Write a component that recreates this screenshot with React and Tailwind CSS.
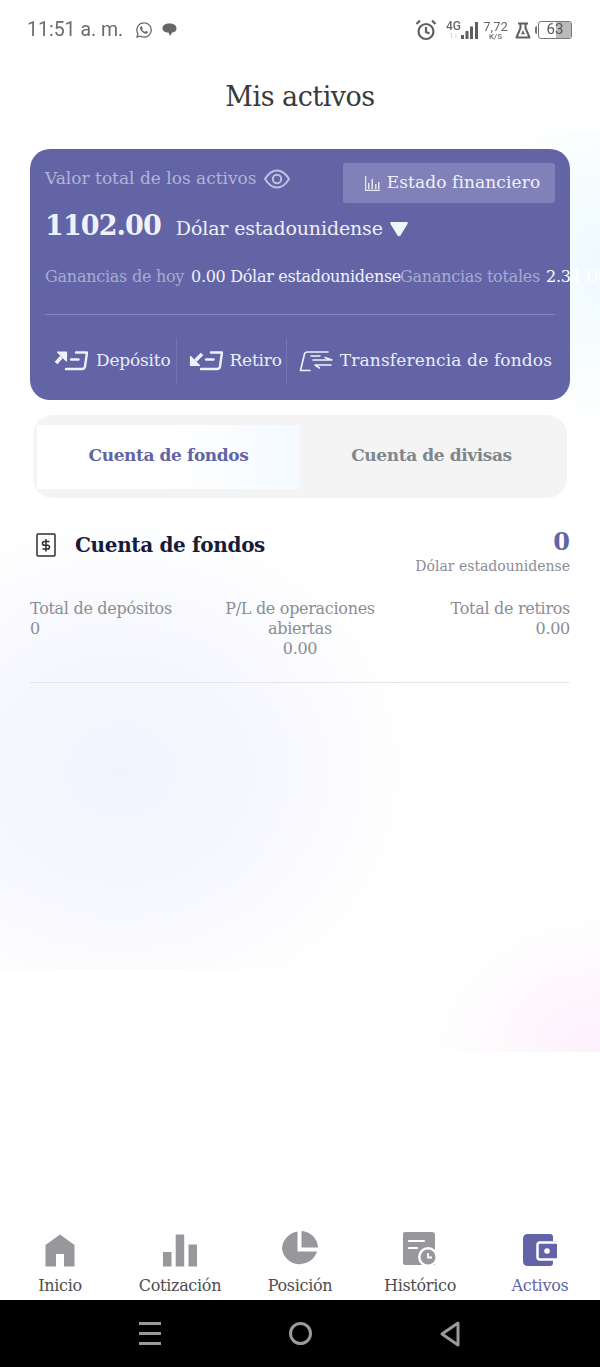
import { FaWhatsapp } from "react-icons/fa";

const STATS = [
  { label: "Total de depósitos", value: "0", align: "text-left" },
  { label: "P/L de operaciones abiertas", value: "0.00", align: "text-center" },
  { label: "Total de retiros", value: "0.00", align: "text-right" },
];

function HomeIcon() {
  return (
    <svg width="30" height="33" viewBox="0 0 30 33" fill="#97979c">
      <path d="M15 0.5 L29.5 11 V32.5 H19 V20 H11 V32.5 H0.5 V11 Z" />
    </svg>
  );
}

function BarsIcon() {
  return (
    <svg width="34" height="33" viewBox="0 0 34 33" fill="#97979c">
      <rect x="0" y="18" width="8.5" height="14.5" />
      <rect x="12.7" y="0.5" width="8.5" height="32" />
      <rect x="25.5" y="10.5" width="8.5" height="22" />
    </svg>
  );
}

function PieIcon() {
  return (
    <svg width="36" height="36" viewBox="0 0 36 36" fill="#97979c">
      <path d="M15.5 0.5 V20.5 H35 A18 18 0 0 1 0 18 A18 18 0 0 1 15.5 0.5 Z" />
      <path d="M19.5 0 A17.5 17.5 0 0 1 36 16.5 H19.5 Z" />
    </svg>
  );
}

function HistoryIcon() {
  return (
    <svg width="36" height="36" viewBox="0 0 36 36">
      <path d="M3 1 H30 Q33 1 33 4 V34 H3 Q1 34 1 32 V3 Q1 1 3 1 Z" fill="#97979c" />
      <path d="M7 10 H22 M7 17 H15" stroke="#fff" strokeWidth="2.2" strokeLinecap="round" />
      <circle cx="26" cy="26" r="10" fill="#fff" />
      <circle cx="26" cy="26" r="7.5" fill="#97979c" />
      <path d="M26 22 V26.5 H30" stroke="#fff" strokeWidth="1.8" fill="none" />
    </svg>
  );
}

function WalletIcon() {
  return (
    <svg width="35" height="33" viewBox="0 0 35 33">
      <path d="M5 0 H27 Q30 0 30 3 V7 H34 V26 H30 V29 Q30 32 27 32 H5 Q0 32 0 27 V5 Q0 0 5 0 Z" fill="#6264a7" />
      <path d="M34 8.5 H17 Q14.5 8.5 14.5 11 V23 Q14.5 25.5 17 25.5 H34" fill="none" stroke="#fff" strokeWidth="2.5" />
      <circle cx="24" cy="17" r="2.8" fill="#fff" />
    </svg>
  );
}

const TABS = [
  { label: "Inicio", icon: HomeIcon },
  { label: "Cotización", icon: BarsIcon },
  { label: "Posición", icon: PieIcon },
  { label: "Histórico", icon: HistoryIcon },
  { label: "Activos", icon: WalletIcon, active: true },
];

function CardOutline() {
  return <path d="M17 9.5 H24.5 M22 2.5 H33 L31 16.5 Q30.5 19 28 19 H12" />;
}

function DepositIcon() {
  return (
    <svg width="34" height="22" viewBox="0 0 34 22" fill="none" stroke="#f1f1fa" strokeWidth="2.4" strokeLinecap="round" strokeLinejoin="round">
      <path d="M3.5 2 H12.5 V11 Z" fill="#f1f1fa" strokeWidth="1.2" />
      <path d="M7.5 7 L2 13" strokeWidth="3.6" strokeLinecap="butt" />
      <CardOutline />
    </svg>
  );
}

function WithdrawIcon() {
  return (
    <svg width="34" height="22" viewBox="0 0 34 22" fill="none" stroke="#f1f1fa" strokeWidth="2.4" strokeLinecap="round" strokeLinejoin="round">
      <path d="M1.5 6.5 V15.5 H10.5 Z" fill="#f1f1fa" strokeWidth="1.2" />
      <path d="M6.5 10.5 L13 4" strokeWidth="3.6" strokeLinecap="butt" />
      <CardOutline />
    </svg>
  );
}

function TransferIcon() {
  return (
    <svg width="34" height="22" viewBox="0 0 34 22" fill="none" stroke="#f1f1fa" strokeWidth="1.6" strokeLinecap="round" strokeLinejoin="round">
      <path d="M11 20.5 H1.5 L5.5 4 Q6 2 8.5 2 H29" />
      <path d="M12 6 H21 M14 10 H33 L26 7.5 M32 15 H16 L20.5 18" />
    </svg>
  );
}

function StatusBar() {
  return (
    <div className="flex h-[60px] items-center justify-between pl-[27px] pr-[28px] text-[#6b6b6b] font-['Roboto',sans-serif] blur-[0.3px]">
      <div className="flex items-center">
        <span className="text-[19.5px] leading-none">11:51 a. m.</span>
        <FaWhatsapp className="ml-[12px] h-[18px] w-[18px]" />
        <svg className="ml-[9px]" width="15" height="14" viewBox="0 0 15 14" fill="#666">
          <path d="M7.5 0.5 C12 0.5 14.5 2.5 14.5 5.5 C14.5 8 12.5 9.5 10 9.5 L8 13 L6.5 9.5 C3 9.5 0.5 8 0.5 5.5 C0.5 2.5 3 0.5 7.5 0.5 Z" />
        </svg>
      </div>
      <div className="flex items-center">
        <svg width="22" height="22" viewBox="0 0 22 22" fill="none" stroke="#5f5f5f" strokeWidth="2.2">
          <circle cx="11" cy="12.5" r="7.5" />
          <path d="M11 8 V13 L14.5 14.5 M1.5 5 L5 1.5 M20.5 5 L17 1.5" />
        </svg>
        <div className="ml-[9px] flex w-[15px] flex-col items-center leading-none">
          <span className="text-[12px] font-medium leading-[12px]">4G</span>
          <span className="text-[8px] leading-[8px] text-[#c4c4c4]">1↓</span>
        </div>
        <svg width="17" height="17" viewBox="0 0 17 17" fill="#5f5f5f">
          <rect x="0" y="13" width="3" height="4" />
          <rect x="4.5" y="9" width="3" height="8" />
          <rect x="9" y="4.5" width="3" height="12.5" />
          <rect x="14" y="0" width="3" height="17" />
        </svg>
        <div className="ml-[6px] flex w-[23px] flex-col items-center leading-none">
          <span className="text-[13px] leading-[13px]">7,72</span>
          <span className="text-[8px] font-medium leading-[8px]">K/S</span>
        </div>
        <svg className="ml-[8px]" width="16" height="17" viewBox="0 0 16 17" fill="none" stroke="#5f5f5f" strokeWidth="2" strokeLinejoin="round">
          <path d="M3 1.5 H13 M5.5 1.5 V6 L1.5 15.5 H14.5 L10.5 6 V1.5" />
          <path d="M8 8.5 L6.5 12 H9.5 Z" fill="#5f5f5f" strokeWidth="0.5" />
        </svg>
        <span className="ml-[4px] h-[8px] w-[2px] rounded-l-sm bg-[#777]" />
        <div className="relative ml-[1px] h-[18px] w-[34px] overflow-hidden rounded-[3px] border-[1.5px] border-[#777] text-center text-[15px] leading-[15px] text-[#555]">
          <span className="absolute inset-y-0 right-0 w-[15px] bg-[#b9b9b9]" />
          <span className="relative">63</span>
        </div>
      </div>
    </div>
  );
}

function ActionDivider({ className }) {
  return <span className={`block h-[46px] w-px bg-[#7375b0] ${className}`} />;
}

function BalanceCard() {
  return (
    <section className="mx-[30px] mt-[19px] h-[251px] rounded-[20px] bg-[#6264a5] px-[15px]">
      <div className="flex items-start justify-between pt-[14px]">
        <div className="flex items-center gap-[7px] pt-[3px]">
          <span className="text-[17px] text-[#b3b4d8]">Valor total de los activos</span>
          <svg width="26" height="22" viewBox="0 0 26 22" fill="none" stroke="#c0c1df" strokeWidth="2">
            <path d="M1 11 C5 4.5 9 2.5 13 2.5 C17 2.5 21 4.5 25 11 C21 17.5 17 19.5 13 19.5 C9 19.5 5 17.5 1 11 Z" />
            <circle cx="13" cy="11" r="4.2" />
          </svg>
        </div>
        <button type="button" className="flex h-[40px] w-[212px] items-center justify-center gap-[7px] rounded-[3px] bg-[#8081b8] pl-[7px] text-[17px] tracking-[0.1px] text-[#f1f1fa]">
          <svg width="15" height="15" viewBox="0 0 15 15" fill="#e4e4f2">
            <rect x="0" y="0" width="1.3" height="15" />
            <rect x="0" y="13.7" width="15" height="1.3" />
            <rect x="3" y="7" width="1.5" height="6" />
            <rect x="6.5" y="3" width="1.5" height="10" />
            <rect x="10" y="8" width="1.5" height="5" />
            <rect x="13" y="6" width="1.5" height="7" />
          </svg>
          Estado financiero
        </button>
      </div>
      <div className="mt-[5px] flex items-center">
        <span className="text-[27px] font-bold leading-[36px] tracking-[-0.9px] text-[#f1f1fa]">1102.00</span>
        <span className="ml-[15px] pt-[4px] text-[19px] tracking-[-0.15px] text-[#eeeef8]">Dólar estadounidense</span>
        <svg className="ml-[6px] mt-[6px]" width="20" height="16" viewBox="0 0 19 16" fill="#eef6f8">
          <path d="M1.5 1 H17.5 Q19 1 18 3 L11 14.5 Q9.5 16 8 14.5 L1 3 Q0 1 1.5 1 Z" />
        </svg>
      </div>
      <div className="mt-[21px] flex h-[24px] items-center whitespace-nowrap text-[16px]">
        <span className="w-[146px] shrink-0 tracking-[-0.25px] text-[#a9aad2]">Ganancias de hoy</span>
        <span className="w-[209px] shrink-0 tracking-[-0.3px] text-[#f1f1fa]">0.00 Dólar estadounidense</span>
        <span className="w-[146px] shrink-0 tracking-[-0.25px] text-[#a9aad2]">Ganancias totales</span>
        <span className="shrink-0 tracking-[-0.3px] text-white">2.34 Dólar estadounidense</span>
      </div>
      <div className="mt-[25px] h-px bg-[#8385bd]" />
      <div className="mt-[23px] flex items-center pl-[9px] text-[#ecedf7]">
        <DepositIcon />
        <span className="ml-[8px] text-[17px] tracking-[-0.2px]">Depósito</span>
        <ActionDivider className="ml-[6px] mr-[12px]" />
        <WithdrawIcon />
        <span className="ml-[6px] text-[17px] tracking-[-0.2px]">Retiro</span>
        <ActionDivider className="ml-[4px] mr-[12px]" />
        <TransferIcon />
        <span className="ml-[7px] text-[17px] tracking-[0.15px]">Transferencia de fondos</span>
      </div>
    </section>
  );
}

function AccountTabs() {
  return (
    <div className="mx-[33px] mt-[15px] flex h-[83px] items-center rounded-[20px] bg-[#f4f4f4] px-[4px] text-[17px] font-bold tracking-[-0.4px]">
      <div className="flex h-[64px] w-[263px] items-center justify-center bg-linear-to-r from-white from-50% to-[#f4faff] pb-[1px] text-[#6264a5]">
        Cuenta de fondos
      </div>
      <div className="flex h-[64px] flex-1 items-center justify-center pb-[1px] text-[#7f878c]">Cuenta de divisas</div>
    </div>
  );
}

function AccountSummary() {
  return (
    <section className="mx-[30px] mt-[27px] border-b border-[#e6e6e9] pb-[23px]">
      <div className="flex items-start justify-between">
        <div className="flex items-center pt-[5px]">
          <svg className="ml-[6px]" width="20" height="24" viewBox="0 0 20 24" fill="none" stroke="#2c2c33" strokeWidth="1.5">
            <rect x="1" y="1" width="18" height="22" rx="1" />
            <path d="M13.5 8.5 H8.5 Q6.5 8.5 6.5 10.5 Q6.5 12.3 8.5 12.3 H11.5 Q13.5 12.3 13.5 14.2 Q13.5 16 11.5 16 H6.5 M10 6 V18.5" />
          </svg>
          <span className="ml-[19px] text-[20px] font-bold tracking-[-0.35px] text-[#171b3a]">Cuenta de fondos</span>
        </div>
        <div className="pt-[3px] text-right">
          <div className="text-[24px] font-bold leading-[28px] text-[#6264a5]">0</div>
          <div className="text-[14px] leading-[20px] text-[#8b8d94]">Dólar estadounidense</div>
        </div>
      </div>
      <div className="mt-[23px] grid grid-cols-[1fr_160px_1fr] text-[16px] leading-[20px] tracking-[-0.3px] text-[#8b8d94]">
        {STATS.map((stat) => (
          <div key={stat.label} className={stat.align}>
            <div>{stat.label}</div>
            <div>{stat.value}</div>
          </div>
        ))}
      </div>
    </section>
  );
}

function BottomNav() {
  return (
    <nav className="grid h-[70px] grid-cols-5 bg-white">
      {TABS.map(({ label, icon: Icon, active }) => (
        <div key={label} className="flex flex-col items-center">
          <div className="flex h-[37px] items-end">
            <Icon />
          </div>
          <span className={`mt-[9px] text-[16px] leading-[20px] tracking-[-0.3px] ${active ? "text-[#6264a5]" : "text-[#4d4d52]"}`}>
            {label}
          </span>
        </div>
      ))}
    </nav>
  );
}

function SystemBar() {
  return (
    <div className="grid h-[67px] grid-cols-3 items-center bg-black px-[75px]">
      <div className="flex flex-col gap-[7px] justify-self-center">
        <span className="h-[3px] w-[22px] bg-[#9a9a9a]" />
        <span className="h-[3px] w-[22px] bg-[#9a9a9a]" />
        <span className="h-[3px] w-[22px] bg-[#9a9a9a]" />
      </div>
      <span className="h-[23px] w-[23px] justify-self-center rounded-full border-[3px] border-[#9a9a9a]" />
      <svg className="justify-self-center" width="20" height="26" viewBox="0 0 20 26" fill="none" stroke="#9a9a9a" strokeWidth="3" strokeLinejoin="round">
        <path d="M18 2 V24 L2 13 Z" />
      </svg>
    </div>
  );
}

export default function App() {
  return (
    <div className="relative flex h-[1367px] w-[600px] flex-col overflow-hidden bg-white font-['DejaVu_Serif',serif]">
      <div className="pointer-events-none absolute inset-x-0 top-[480px] h-[490px] bg-[radial-gradient(ellipse_300px_260px_at_120px_290px,#f2f3fd_0%,#f7f8fe_50%,#ffffff00_100%)]" />
      <div className="pointer-events-none absolute right-0 top-[130px] h-[310px] w-[130px] bg-[radial-gradient(ellipse_120px_170px_at_130px_130px,#eefafe_0%,#ffffff00_100%)]" />
      <div className="pointer-events-none absolute right-0 top-[900px] h-[152px] w-[200px] bg-[radial-gradient(ellipse_170px_140px_at_200px_152px,#fdf0fc_0%,#ffffff00_100%)]" />
      <div className="relative flex flex-1 flex-col">
        <StatusBar />
        <h1 className="flex h-[70px] items-center justify-center pt-[4px] text-[27px] font-normal tracking-[-0.5px] text-[#3a3a3a]">Mis activos</h1>
        <BalanceCard />
        <AccountTabs />
        <AccountSummary />
      </div>
      <div className="relative">
        <BottomNav />
        <SystemBar />
      </div>
    </div>
  );
}
